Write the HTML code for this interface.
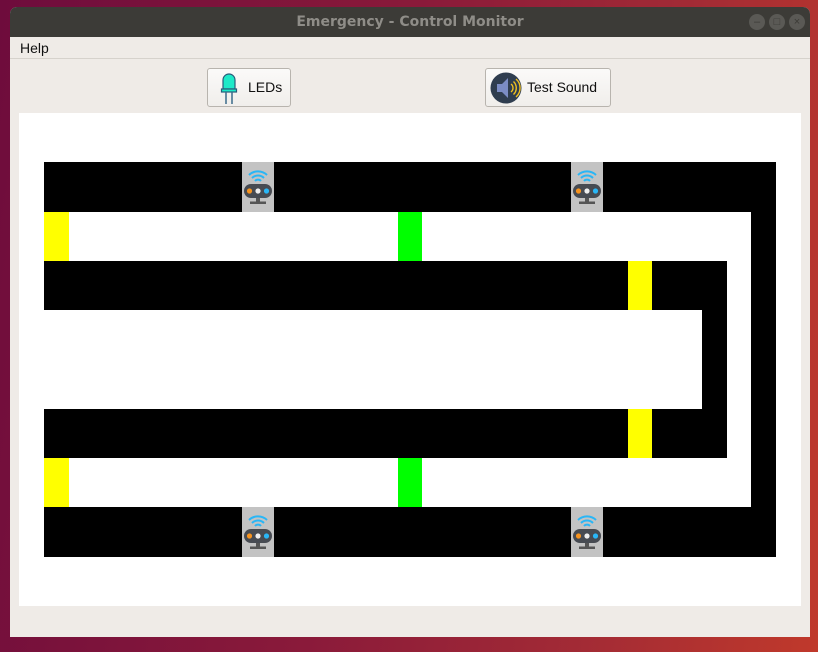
<!DOCTYPE html>
<html><head><meta charset="utf-8"><style>
*{margin:0;padding:0;box-sizing:border-box}
body{width:818px;height:652px;overflow:hidden;position:relative;font-family:"Liberation Sans","DejaVu Sans",sans-serif;
background:linear-gradient(100deg,#6e0c3c 0%,#8a1a3a 45%,#a32b35 75%,#c0392b 100%)}
.a{position:absolute}
#win{left:10px;top:7px;width:800px;height:630px;background:#efebe7;border-radius:7px 7px 0 0;overflow:hidden}
#title{left:0;top:0;width:800px;height:30px;background:#3c3b37;color:#8f8d88;font-weight:bold;font-size:14px;text-align:center;line-height:30px;font-family:"DejaVu Sans",sans-serif}
.wb{top:7px;width:16px;height:16px;border-radius:50%;background:#5a5955;color:#3c3b37;font-size:11px;line-height:16px;text-align:center}
#menu{left:0;top:30px;width:800px;height:22px;border-bottom:1px solid #d6d2cc;font-size:14px;line-height:22px;padding-left:10px;color:#111}
.btn{top:61px;height:39px;border:1px solid #b8b4ae;border-radius:3px;background:linear-gradient(#fbfaf9,#f0eeeb);font-size:14px;color:#111;line-height:37px}
#canvas{left:9px;top:106px;width:782px;height:493px;background:#fff}
.k{position:absolute;background:#000}
.y{position:absolute;background:#ffff00}
.g{position:absolute;background:#00ff00}
.s{position:absolute;width:32px;height:50px;background:#c3c3c3}
</style></head><body>
<div id="win" class="a">
 <div id="title" class="a">Emergency - Control Monitor</div>
 <div class="a wb" style="left:739px">–</div><div class="a wb" style="left:759px">□</div><div class="a wb" style="left:779px">×</div>
 <div id="menu" class="a">Help</div>
 <div class="a btn" style="left:197px;width:84px">
  <svg class="a" style="left:10px;top:3px" width="22" height="33" viewBox="0 0 22 33"><path d="M5 17V8a6 6 0 0 1 12 0v9z" fill="#1de9c8" stroke="#2a5a7a" stroke-width="1.2"/><rect x="3.5" y="17" width="15" height="3" fill="#1de9c8" stroke="#2a5a7a" stroke-width="1.2"/><path d="M8 20v12M14 20v12" stroke="#3a6a8a" stroke-width="1.5"/></svg>
  <span class="a" style="left:40px;top:0">LEDs</span></div>
 <div class="a btn" style="left:475px;width:126px">
  <svg class="a" style="left:4px;top:3px" width="32" height="32" viewBox="0 0 32 32"><circle cx="16" cy="16" r="15.5" fill="#2f3d4f"/><path d="M7 12h5l6-6v20l-6-6H7z" fill="#7b8cc4"/><path d="M21 12a5 5 0 0 1 0 8M23.5 9.5a9 9 0 0 1 0 13M26 7a12 12 0 0 1 0 18" stroke="#f0c020" stroke-width="1.4" fill="none"/></svg>
  <span class="a" style="left:41px;top:0">Test Sound</span></div>
 <div id="canvas" class="a"></div>
</div>
<div class="k" style="left:44px;top:162px;width:732px;height:50px"></div>
<div class="k" style="left:751px;top:162px;width:25px;height:395px"></div>
<div class="k" style="left:44px;top:261px;width:683px;height:49px"></div>
<div class="k" style="left:702px;top:261px;width:25px;height:197px"></div>
<div class="k" style="left:44px;top:409px;width:683px;height:49px"></div>
<div class="k" style="left:44px;top:507px;width:732px;height:50px"></div>
<div class="y" style="left:44px;top:212px;width:25px;height:49px"></div>
<div class="g" style="left:398px;top:212px;width:24px;height:49px"></div>
<div class="y" style="left:628px;top:261px;width:24px;height:49px"></div>
<div class="y" style="left:628px;top:409px;width:24px;height:49px"></div>
<div class="y" style="left:44px;top:458px;width:25px;height:49px"></div>
<div class="g" style="left:398px;top:458px;width:24px;height:49px"></div>
<svg width="0" height="0" style="position:absolute"><defs><g id="sn">
<path d="M7 13a13 13 0 0 1 18 0M10 16a8.5 8.5 0 0 1 12 0M13 19a4 4 0 0 1 6 0" stroke="#29b6f6" stroke-width="2" fill="none"/>
<rect x="2" y="22" width="28" height="14" rx="7" fill="#474b52"/>
<circle cx="7.5" cy="29" r="2.6" fill="#f7931e"/><circle cx="16" cy="29" r="2.6" fill="#eee"/><circle cx="24.5" cy="29" r="2.6" fill="#29b6f6"/>
<rect x="14" y="36" width="4" height="4" fill="#555"/><rect x="8" y="39.5" width="16" height="2.5" fill="#555"/>
</g></defs></svg>
<svg class="s" style="left:242px;top:162px" viewBox="0 0 32 50"><use href="#sn"/></svg>
<svg class="s" style="left:571px;top:162px" viewBox="0 0 32 50"><use href="#sn"/></svg>
<svg class="s" style="left:242px;top:507px" viewBox="0 0 32 50"><use href="#sn"/></svg>
<svg class="s" style="left:571px;top:507px" viewBox="0 0 32 50"><use href="#sn"/></svg>
</body></html>
